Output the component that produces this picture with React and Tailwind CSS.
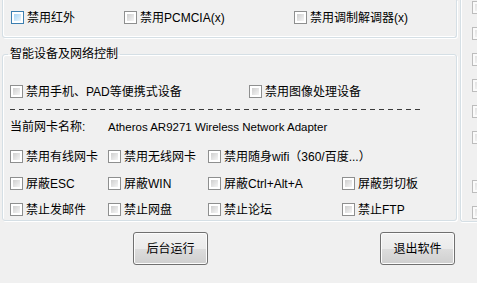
import React from "react";

const FONT = { fontFamily: '"Liberation Sans", "Noto Sans CJK SC", sans-serif' };

function Box({ variant = "normal" }) {
  if (variant === "hot") {
    return (
      <span className="flex h-[13px] w-[13px] shrink-0 border border-[#3c7fb1] bg-white p-[2px]">
        <span className="block h-full w-full bg-gradient-to-br from-[#a9d6f6] to-[#eaf6fd]" />
      </span>
    );
  }
  if (variant === "disabled") {
    return (
      <span className="flex h-[13px] w-[13px] shrink-0 border border-[#bcbcbc] bg-[#fafafa] p-[2px]">
        <span className="block h-full w-full bg-gradient-to-br from-[#e2e2e2] to-[#f7f7f7]" />
      </span>
    );
  }
  return (
    <span className="flex h-[13px] w-[13px] shrink-0 border border-[#8e8f8f] bg-white p-[2px]">
      <span className="block h-full w-full bg-gradient-to-br from-[#cfcfcf] to-[#f5f5f5]" />
    </span>
  );
}

function Check({ label, w, variant }) {
  return (
    <div className="flex h-[13px] shrink-0 items-center gap-[3px]" style={w ? { width: w } : undefined}>
      <Box variant={variant} />
      <span className="whitespace-nowrap text-[12px] leading-[14px] text-black">{label}</span>
    </div>
  );
}

function Button({ children }) {
  return (
    <button className="flex h-[33px] w-[75px] items-center justify-center rounded-[3px] border border-[#707070] bg-[linear-gradient(to_bottom,#f2f2f2_0%,#ebebeb_50%,#dddddd_51%,#cfcfcf_100%)] text-[12px] leading-[14px] text-black shadow-[inset_0_0_0_1px_#fcfcfc]">
      {children}
    </button>
  );
}

export default function App() {
  return (
    <div className="flex h-[283px] w-[477px] overflow-hidden bg-[#f0f0f0]" style={FONT}>
      <div className="ml-[2px] flex w-[455px] shrink-0 flex-col">
        {/* top group (cut off above) */}
        <div className="flex h-[38px] items-start rounded-b-[3px] border-x border-b border-[#d5dfe5] pl-[8px] pt-[11px] shadow-[inset_1px_-1px_0_#ffffff,1px_1px_0_#ffffff]">
          <Check label="禁用红外" w={113} variant="hot" />
          <Check label="禁用PCMCIA(x)" w={170} />
          <Check label="禁用调制解调器(x)" />
        </div>

        {/* second group */}
        <fieldset className="mt-[9px] flex h-[174px] flex-col rounded-[3px] border border-[#d5dfe5] px-0 pb-0 shadow-[inset_1px_1px_0_#ffffff,1px_1px_0_#ffffff]">
          <legend className="ml-[5px] px-[2px] text-[12px] leading-[14px] text-black">智能设备及网络控制</legend>
          <div className="mt-[24px] flex pl-[7px]">
            <Check label="禁用手机、PAD等便携式设备" w={239} />
            <Check label="禁用图像处理设备" />
          </div>
          <div className="ml-[7px] mt-[11px] h-px w-[411px] bg-[repeating-linear-gradient(90deg,#3a3a3a_0px,#3a3a3a_5px,transparent_5px,transparent_9px)]" />
          <div className="mt-[10px] flex pl-[7px] text-[12px] leading-[14px] text-black">
            <span className="w-[98px] shrink-0">当前网卡名称:</span>
            <span className="whitespace-nowrap text-[11.5px]">Atheros AR9271 Wireless Network Adapter</span>
          </div>
          <div className="mt-[16px] flex pl-[7px]">
            <Check label="禁用有线网卡" w={98} />
            <Check label="禁用无线网卡" w={100} />
            <Check label="禁用随身wifi（360/百度...）" />
          </div>
          <div className="mt-[14px] flex pl-[7px]">
            <Check label="屏蔽ESC" w={98} />
            <Check label="屏蔽WIN" w={100} />
            <Check label="屏蔽Ctrl+Alt+A" w={134} />
            <Check label="屏蔽剪切板" />
          </div>
          <div className="mt-[13px] flex pl-[7px]">
            <Check label="禁止发邮件" w={98} />
            <Check label="禁止网盘" w={100} />
            <Check label="禁止论坛" w={134} />
            <Check label="禁止FTP" />
          </div>
        </fieldset>

        {/* buttons */}
        <div className="mt-[11px] flex pl-[131px]">
          <Button>后台运行</Button>
          <div className="ml-[172px]">
            <Button>退出软件</Button>
          </div>
        </div>
      </div>

      {/* right strip (cut off) */}
      <div className="ml-[3px] flex h-[222px] flex-1 flex-col gap-[13px] rounded-bl-[3px] border-b border-l border-[#d5dfe5] pl-[11px] pt-[1px] shadow-[inset_1px_0_0_#ffffff,0_1px_0_#ffffff]">
        <Box variant="disabled" />
        <Box variant="disabled" />
        <Box variant="disabled" />
        <Box variant="disabled" />
        <Box variant="disabled" />
        <Box variant="disabled" />
        <div className="mt-[23px]"><Box variant="disabled" /></div>
        <Box variant="disabled" />
      </div>
    </div>
  );
}
